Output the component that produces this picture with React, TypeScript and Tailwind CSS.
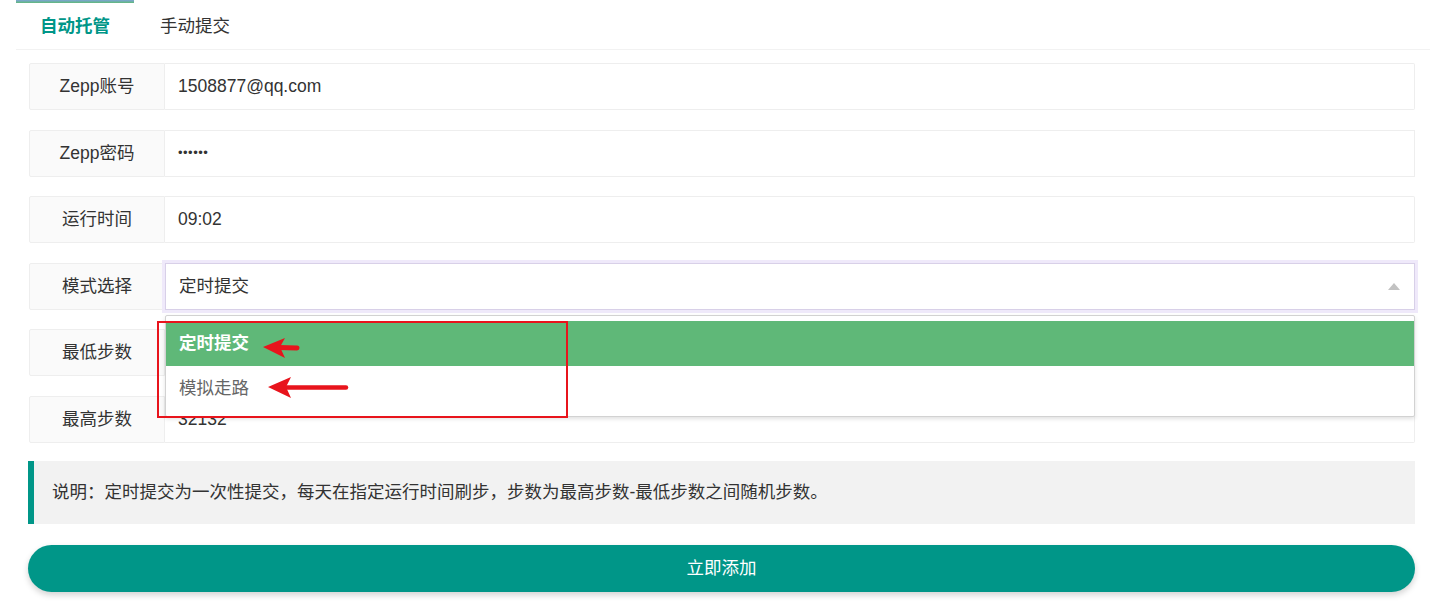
import React from "react";

const FONT = { fontFamily: '"Liberation Sans", "Noto Sans CJK SC", sans-serif' };

function Row({ label, children, last }: { label: string; children: React.ReactNode; last?: boolean }) {
  return (
    <div className={`flex h-[47px] ${last ? "" : "mb-[19.5px]"}`}>
      <div className="w-[136px] shrink-0 flex items-center justify-center bg-[#fafafa] border border-[#eeeeee] rounded-l-[2px] text-[17.5px] text-[#333]">
        {label}
      </div>
      <div className="relative flex-1">{children}</div>
    </div>
  );
}

function Input({ value }: { value: string }) {
  return (
    <div className="h-full flex items-center pl-[13px] border border-l-0 border-[#eeeeee] rounded-r-[2px] bg-white text-[17.5px] text-[#333]">
      {value}
    </div>
  );
}

export default function App() {
  return (
    <div className="relative w-[1447px] h-[606px] bg-white overflow-hidden" style={FONT}>
      <div className="ml-[16px] mr-[17px]">
        {/* tabs */}
        <div className="flex h-[50px] border-b border-[#f2f2f2]">
          <div className="relative w-[118px] flex items-center justify-center pt-[3px] text-[17.5px] font-bold text-[#009688]">
            <div className="absolute top-0 left-0 right-0 h-[3px] bg-gradient-to-b from-[#7ea3d4] to-[#5fb878]" />
            自动托管
          </div>
          <div className="flex items-center pt-[3px] px-[26px] text-[17.5px] text-[#333]">手动提交</div>
        </div>

        {/* form */}
        <div className="pl-[13px] pr-[15px] pt-[13px]">
          <Row label="Zepp账号">
            <Input value="1508877@qq.com" />
          </Row>
          <Row label="Zepp密码">
            <div className="h-full flex items-center pl-[13px] border border-l-0 border-[#eeeeee] bg-white text-[13px] tracking-[0.5px] text-[#333]">
              ••••••
            </div>
          </Row>
          <Row label="运行时间">
            <Input value="09:02" />
          </Row>
          <Row label="模式选择">
            <div className="h-full flex items-center justify-between pl-[13px] pr-[14px] border border-[#d8d0e8] bg-white text-[17.5px] text-[#333] shadow-[0_0_0_3px_#efe9fa]">
              <span>定时提交</span>
              <svg width="12" height="7" viewBox="0 0 12 7">
                <polygon points="6,0 12,7 0,7" fill="#c2c2c2" />
              </svg>
            </div>
            <div className="absolute left-0 right-0 top-[52px] z-20 bg-white border border-[#d2d2d2] rounded-[2px] py-[5px] shadow-[0_2px_4px_rgba(0,0,0,0.12)]">
              <div className="h-[45px] flex items-center pl-[13px] bg-[#5fb878] text-white font-bold text-[17.5px]">定时提交</div>
              <div className="h-[45px] flex items-center pl-[13px] text-[#666] text-[17.5px]">模拟走路</div>
            </div>
          </Row>
          <Row label="最低步数">
            <Input value="" />
          </Row>
          <Row label="最高步数" last>
            <Input value="32132" />
          </Row>

          {/* note */}
          <div className="mt-[18.5px] ml-[-1px] h-[63px] flex items-center pl-[18px] bg-[#f2f2f2] border-l-[6px] border-[#009688] text-[17.5px] text-[#333]">
            说明：定时提交为一次性提交，每天在指定运行时间刷步，步数为最高步数-最低步数之间随机步数。
          </div>

          {/* button */}
          <div className="mt-[20.5px] ml-[-1px] h-[47px] flex items-center justify-center rounded-full bg-[#009688] text-white text-[17.5px] shadow-[0_3px_6px_rgba(0,0,0,0.18)]">
            立即添加
          </div>
        </div>
      </div>

      {/* annotation */}
      <div className="absolute left-[157px] top-[321px] w-[411px] h-[97px] border-2 border-[#e8141c] z-30 pointer-events-none" />
      <svg className="absolute left-0 top-0 z-30 pointer-events-none" width="1447" height="606">
        <polygon points="263,347 285,338 280,347 285,358" fill="#e8141c" />
        <path d="M279 347.5 L297 348" stroke="#e8141c" strokeWidth="5" strokeLinecap="round" />
        <polygon points="268,387 291,377 286,387 291,398" fill="#e8141c" />
        <path d="M285 387.5 L346 387.5" stroke="#e8141c" strokeWidth="4.5" strokeLinecap="round" />
      </svg>
    </div>
  );
}
